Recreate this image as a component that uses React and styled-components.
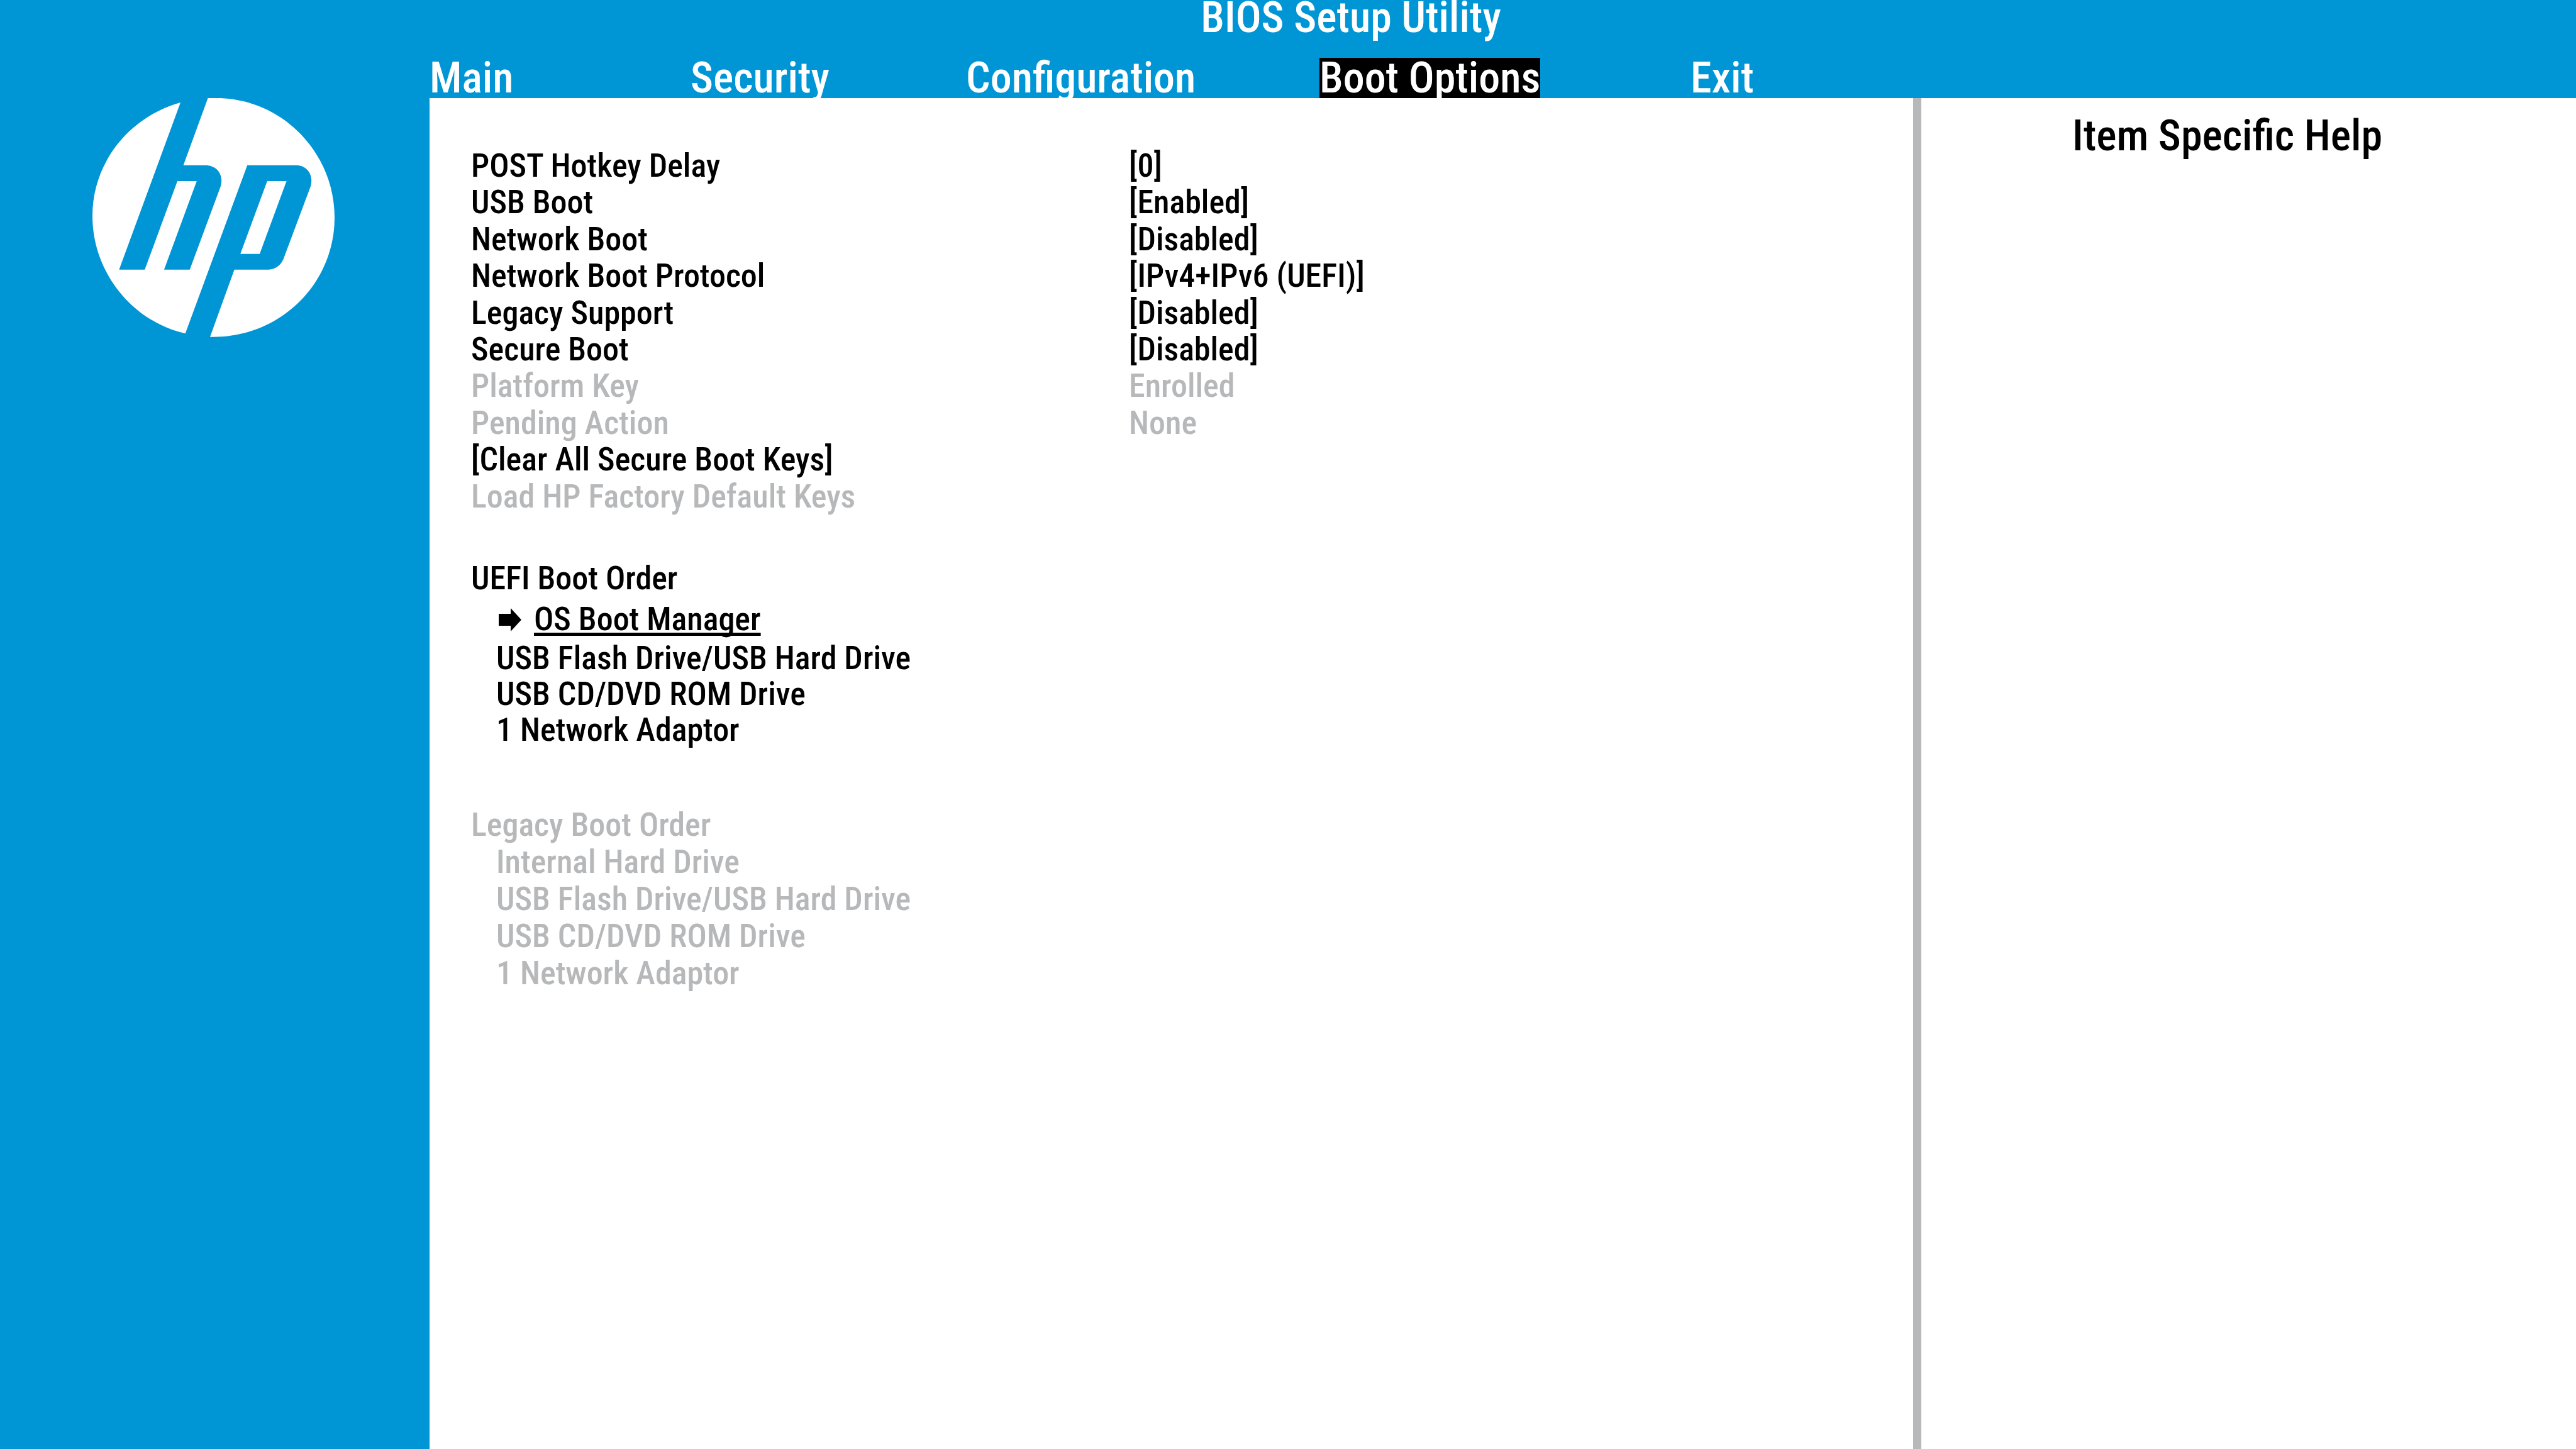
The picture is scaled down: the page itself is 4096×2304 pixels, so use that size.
import React from "react";
import styled, { createGlobalStyle, css } from "styled-components";

const BLUE = "#0096d6";
const GREY = "#b7b8ba";

const GlobalStyle = createGlobalStyle`
  *, *::before, *::after { box-sizing: border-box; }
  html, body { margin: 0; padding: 0; background: ${BLUE}; }
  body, button, select {
    font-family: "Roboto Condensed", Roboto, "Liberation Sans", sans-serif;
    font-weight: 500;
  }
`;

const plainControl = css`
  appearance: none;
  margin: 0;
  padding: 0;
  border: 0;
  border-radius: 0;
  background: transparent;
  font-size: inherit;
  line-height: inherit;
  text-align: left;
`;

const Screen = styled.div`
  display: grid;
  grid-template-columns: 683px minmax(0, 1fr);
  min-height: 100vh;
  background: ${BLUE};
`;

const Sidebar = styled.aside`
  padding: 156px 0 0 147px;
`;

const Logo = styled.svg`
  display: block;
  width: 385px;
  height: 380px;
`;

const Workspace = styled.div`
  display: grid;
  grid-template-rows: auto 1fr;
`;

const Header = styled.header`
  display: flex;
  flex-direction: column;
  gap: 36px;
  color: #fff;
  font-size: 68px;
`;

const Title = styled.h1`
  margin: 0;
  padding-right: 483px;
  font-size: 68px;
  font-weight: 500;
  line-height: 56px;
  text-align: center;
`;

const Tabs = styled.nav`
  display: grid;
  grid-template-columns: 415fr 438fr 562fr 590fr 1408fr;
  justify-items: start;
  line-height: 64px;
`;

const Tab = styled.button`
  ${plainControl}
  height: 64px;
  color: #fff;
  background: ${(p) => (p.$active ? "#000" : "transparent")};
`;

const Body = styled.div`
  display: grid;
  grid-template-columns: minmax(0, 1fr) 1054px;
`;

const Main = styled.main`
  padding: 79px 64px 0 66px;
  background: #fff;
  color: #000;
  font-size: 52px;
  line-height: 58px;
`;

const Settings = styled.section`
  display: grid;
  grid-auto-rows: 1fr;
  min-height: 584px;
`;

const Setting = styled.div`
  display: grid;
  grid-template-columns: 1046px minmax(0, 1fr);
  justify-items: start;
  align-items: start;
  color: ${(p) => (p.$disabled ? GREY : "#000")};
`;

const Value = styled.select`
  ${plainControl}
  height: 58px;
  color: #000;
  opacity: 1;
`;

const Action = styled.button`
  ${plainControl}
  height: 58px;
  color: ${(p) => (p.disabled ? GREY : "#000")};
`;

const UefiOrder = styled.section`
  margin-top: 69px;
`;

const LegacyOrder = styled.section`
  display: grid;
  gap: 1px;
  margin-top: 94px;
  color: ${GREY};
`;

const Heading = styled.h2`
  margin: 0;
  font-size: 52px;
  font-weight: 500;
  line-height: ${(p) => (p.$tall ? 64 : 58)}px;
`;

const List = styled.ol`
  display: grid;
  gap: ${(p) => p.$gap}px;
  margin: 0;
  padding: 0 0 0 40px;
  list-style: none;
`;

const Device = styled.li`
  line-height: ${(p) => p.$line}px;
`;

const Selected = styled.li`
  display: flex;
  align-items: center;
  gap: 20px;
  line-height: 66px;
`;

const Arrow = styled.svg`
  display: block;
  width: 40px;
  height: 37px;
`;

const SelectedName = styled.span`
  text-decoration: underline;
  text-decoration-thickness: 5px;
  text-decoration-skip-ink: none;
  text-underline-offset: 4px;
`;

const Help = styled.aside`
  padding: 28px 68px 0 0;
  border-left: 13px solid ${GREY};
  background: #fff;
`;

const HelpTitle = styled.h2`
  margin: 0;
  color: #000;
  font-size: 68px;
  font-weight: 500;
  line-height: 64px;
  text-align: center;
`;

const tabs = ["Main", "Security", "Configuration", "Boot Options", "Exit"];

const settings = [
  { id: "hotkey", label: "POST Hotkey Delay", value: "[0]" },
  { id: "usb", label: "USB Boot", value: "[Enabled]" },
  { id: "network", label: "Network Boot", value: "[Disabled]" },
  { id: "protocol", label: "Network Boot Protocol", value: "[IPv4+IPv6 (UEFI)]" },
  { id: "legacy", label: "Legacy Support", value: "[Disabled]" },
  { id: "secure", label: "Secure Boot", value: "[Disabled]" },
];

const states = [
  { label: "Platform Key", value: "Enrolled" },
  { label: "Pending Action", value: "None" },
];

const uefiDevices = ["USB Flash Drive/USB Hard Drive", "USB CD/DVD ROM Drive", "1 Network Adaptor"];
const legacyDevices = ["Internal Hard Drive", ...uefiDevices];

function HpLogo() {
  return (
    <Logo viewBox="57 59 1254 1236" preserveAspectRatio="none" role="img" aria-label="HP">
      <path
        fill="#fff"
        d="M513 82C250 155 57 390 57 668C57 960 265 1215 538 1276L859 406H1110C1168 406 1204 455 1187 515L1046 892C1034 922 1004 946 970 946H792L666 1294H684C1030 1294 1311 1019 1311 677C1311 336 1034 59 700 59H655L528 406H640C704 406 738 457 721 515L561 946H428L597 488H497L328 946H195Z"
      />
      <path fill="#fff" d="M962 488H1062L923 865H823Z" />
    </Logo>
  );
}

export default function App() {
  return (
    <>
      <GlobalStyle />
      <Screen>
        <Sidebar>
          <HpLogo />
        </Sidebar>
        <Workspace>
          <Header>
            <Title>BIOS Setup Utility</Title>
            <Tabs>
              {tabs.map((name) => (
                <Tab key={name} type="button" $active={name === "Boot Options"}>
                  {name}
                </Tab>
              ))}
            </Tabs>
          </Header>
          <Body>
            <Main>
              <Settings>
                {settings.map(({ id, label, value }) => (
                  <Setting key={id}>
                    <label htmlFor={id}>{label}</label>
                    <Value id={id} defaultValue={value}>
                      <option>{value}</option>
                    </Value>
                  </Setting>
                ))}
                {states.map(({ label, value }) => (
                  <Setting key={label} $disabled>
                    <span>{label}</span>
                    <span>{value}</span>
                  </Setting>
                ))}
                <Action type="button">[Clear All Secure Boot Keys]</Action>
                <Action type="button" disabled>
                  Load HP Factory Default Keys
                </Action>
              </Settings>
              <UefiOrder>
                <Heading $tall>UEFI Boot Order</Heading>
                <List $gap={0}>
                  <Selected>
                    <Arrow viewBox="0 0 40 37" aria-hidden="true">
                      <path d="M4 9H23V0L40 18.5L23 37V28H4Z" />
                    </Arrow>
                    <SelectedName>OS Boot Manager</SelectedName>
                  </Selected>
                  {uefiDevices.map((name) => (
                    <Device key={name} $line={57}>
                      {name}
                    </Device>
                  ))}
                </List>
              </UefiOrder>
              <LegacyOrder>
                <Heading>Legacy Boot Order</Heading>
                <List $gap={1}>
                  {legacyDevices.map((name) => (
                    <Device key={name} $line={58}>
                      {name}
                    </Device>
                  ))}
                </List>
              </LegacyOrder>
            </Main>
            <Help>
              <HelpTitle>Item Specific Help</HelpTitle>
            </Help>
          </Body>
        </Workspace>
      </Screen>
    </>
  );
}
